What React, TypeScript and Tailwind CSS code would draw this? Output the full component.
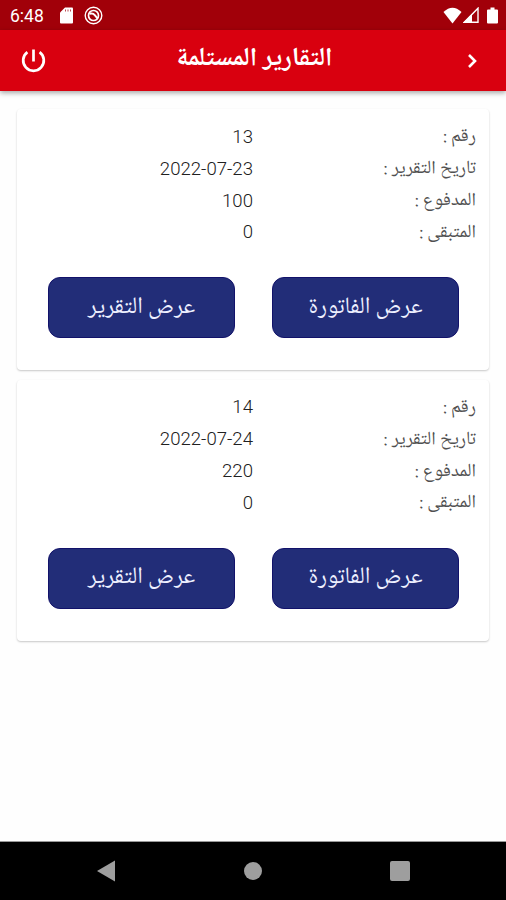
import React from "react";

type Report = { id: string; date: string; paid: string; rest: string };

const reports: Report[] = [
  { id: "13", date: "2022-07-23", paid: "100", rest: "0" },
  { id: "14", date: "2022-07-24", paid: "220", rest: "0" },
];

function Row({ label, value }: { label: string; value: string }) {
  return (
    <div className="flex h-[31.8px] items-center">
      <div className="w-[223px] pt-[3px] text-[18.8px] leading-8 text-[#505050]">{label}</div>
      <div className="pt-0.5 font-[Roboto,sans-serif] text-[18.6px] leading-8 font-light text-[#202020]">
        <bdi dir="ltr">{value}</bdi>
      </div>
    </div>
  );
}

function ActionButton({ children }: { children: React.ReactNode }) {
  return (
    <button className="flex h-[61px] w-[187px] items-center justify-center rounded-xl border border-[#12126a] bg-[#222d78] text-[23.5px] text-[#eef0ff]">
      {children}
    </button>
  );
}

function ReportCard({ report }: { report: Report }) {
  return (
    <section className="h-[261px] rounded-[4px] bg-white pt-[11px] shadow-[0_1px_2px_rgba(0,0,0,0.22)]">
      <div className="h-[128px] pr-[13px]">
        <Row label="رقم :" value={report.id} />
        <Row label="تاريخ التقرير :" value={report.date} />
        <Row label="المدفوع :" value={report.paid} />
        <Row label="المتبقى :" value={report.rest} />
      </div>
      <div className="mt-[29px] flex justify-between pr-[30px] pl-[31px]">
        <ActionButton>عرض الفاتورة</ActionButton>
        <ActionButton>عرض التقرير</ActionButton>
      </div>
    </section>
  );
}

function StatusBar() {
  return (
    <div dir="ltr" className="flex h-[30px] items-center justify-between bg-[#a10009] pr-[8px] pl-[10px] text-white">
      <div className="flex items-center">
        <span className="w-[50px] pt-[3px] font-[Roboto,sans-serif] text-[17.5px] leading-none">6:48</span>
        <svg className="mr-[11px]" width="13" height="17" viewBox="0 0 13 17">
          <path fill="currentColor" d="M5 0.5h7q1 0 1 1v14q0 1-1 1H1q-1 0-1-1V5.5z" />
          <path stroke="#a10009" strokeWidth="1" d="M5.5 2.5v2M8 2.5v2M10.5 2.5v2" opacity=".7" />
        </svg>
        <svg width="19" height="19" viewBox="0 0 19 19" fill="none" stroke="currentColor">
          <circle cx="9.5" cy="9.5" r="8.3" strokeWidth="1.4" />
          <circle cx="9.5" cy="9.5" r="5" strokeWidth="1.7" />
          <path strokeWidth="2" d="M5.5 7.8q3.5-1 5.5 1.5t2.5 3" />
        </svg>
      </div>
      <div className="flex items-center">
        <svg width="19" height="17" viewBox="0 0 20 17" preserveAspectRatio="none" fill="currentColor">
          <path d="M10 16.5 0.5 5Q10-3.5 19.5 5z" />
        </svg>
        <svg className="ml-px" width="16" height="16" viewBox="0 0 16 16">
          <path fill="none" stroke="currentColor" strokeWidth="1.4" d="M1.2 15.2H15V1.2z" />
          <path fill="currentColor" d="M0 16 9 7v9z" />
        </svg>
        <svg className="ml-2" width="11" height="17" viewBox="0 0 11 17" fill="currentColor">
          <path d="M3.5 0.5h4v2h2.5q1 0 1 1v12q0 1-1 1H1q-1 0-1-1v-12q0-1 1-1h2.5z" />
        </svg>
      </div>
    </div>
  );
}

export default function App() {
  return (
    <div dir="rtl" className="flex h-[900px] w-[506px] flex-col overflow-hidden bg-[#fefefe] font-['Noto_Naskh_Arabic_UI','Noto_Naskh_Arabic',serif]">
      <StatusBar />
      <header className="flex h-[61px] items-center justify-between bg-[#d9000f] pr-[28px] pl-[20px] text-white shadow-[0_2px_5px_rgba(0,0,0,0.35)]">
        <svg width="11" height="16" viewBox="0 0 11 16" fill="none" stroke="currentColor" strokeWidth="2.6">
          <path d="m2 2 6 6-6 6" />
        </svg>
        <h1 className="pr-[6px] pb-0.5 text-[26px] font-bold">التقارير المستلمة</h1>
        <svg width="27" height="27" viewBox="0 0 27 27" fill="none" stroke="currentColor" strokeWidth="2.7">
          <path d="M13.5 2.5v12M7.4 5.2a10.3 10.3 0 1 0 12.2 0" />
        </svg>
      </header>
      <main className="flex flex-1 flex-col gap-[9.5px] pt-[18px] pr-[17px] pl-[17px]">
        {reports.map((report) => (
          <ReportCard key={report.id} report={report} />
        ))}
      </main>
      <nav dir="ltr" className="flex h-[59px] items-center justify-between border-t border-[#999] bg-black px-[96px] text-[#9e9e9e]">
        <svg width="20" height="22" viewBox="0 0 20 22" fill="currentColor"><path d="M1 11 19 .5v21z" /></svg>
        <div className="h-[18px] w-[18px] rounded-full bg-[#9e9e9e]" />
        <div className="h-[20px] w-[20px] rounded-[2px] bg-[#9e9e9e]" />
      </nav>
    </div>
  );
}
